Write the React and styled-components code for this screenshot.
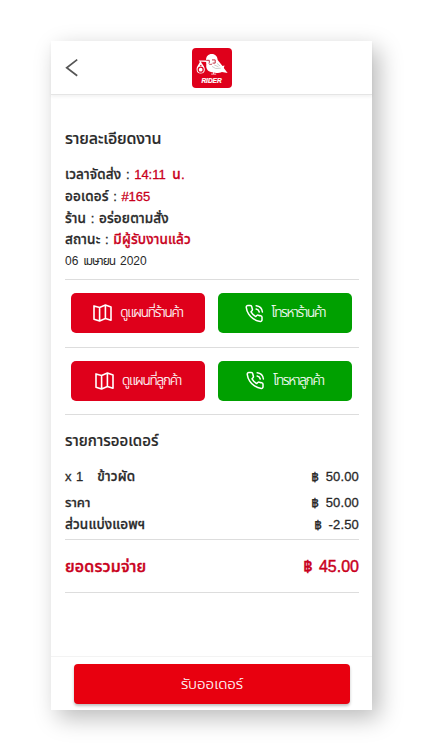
// Imports
import React from "react";
import styled, { createGlobalStyle } from "styled-components";

// Back arrow
const BackIcon = () => (
	<svg width="14" height="20" viewBox="0 0 14 20" fill="none" stroke="#555" strokeWidth="1.7">
		<path d="M12.2 1.6 1.7 9.8l10.5 8"/>
	</svg>
);

// Folded map
const MapIcon = () => (
	<svg width="19" height="18" viewBox="0 0 19 18" fill="none" stroke="#fff" strokeWidth="1.6" strokeLinejoin="round">
		<path d="M1 1.9 6.6 3.4l5.8-2.3L18 3v13.2l-5.6-1.7-5.8 2.4L1 15.2zM6.6 3.4v13.5M12.4 1.1v13.4"/>
	</svg>
);

// Ringing phone
const CallIcon = () => (
	<svg width="19" height="19" viewBox="0 0 24 24" fill="none" stroke="#fff" strokeWidth="1.9" strokeLinecap="round" strokeLinejoin="round">
		<path d="M14.1 6.2a5 5 0 0 1 3.9 3.9M14.1 2.2a9 9 0 0 1 7.9 7.9M21.5 17v3a2 2 0 0 1-2.2 2 19.8 19.8 0 0 1-8.6-3.1 19.5 19.5 0 0 1-6-6A19.8 19.8 0 0 1 1.6 4.2 2 2 0 0 1 3.6 2h3a2 2 0 0 1 2 1.7c.1 1 .4 1.9.7 2.8a2 2 0 0 1-.5 2.1L7.6 9.9a16 16 0 0 0 6 6l1.3-1.3a2 2 0 0 1 2.1-.4c.9.3 1.8.6 2.8.7a2 2 0 0 1 1.7 2.1z"/>
	</svg>
);

// Bird carrying a money bag
const BirdIcon = () => (
	<svg width="40" height="27" viewBox="0 0 40 27">
		<path d="M14 12.4c0-3.9 2.2-6.3 5.8-6.3s5.6 2.4 5.9 6l4.8 5.8 2-.4-.7 2.6 3.8 4.9-5.7-1.1c-2.5 1.3-7.9 1.3-11 .2-3.6-1.3-5-4-4.6-7.4z" fill="#fff"/>
		<path d="M6.8 12.6h10.4v1.5H14l-6.8-.5z" fill="#fff"/>
		<path d="M8 13.3c-.3 2.5-3.4 4.6-3.4 8.1a4.1 4.1 0 0 0 8.2 0c0-3.3-3.5-5.5-3.8-8.1z" fill="#fff"/>
		<circle cx="8.7" cy="21.7" r="2.5" fill="none" stroke="#df001b" strokeWidth="1.2"/>
		<path d="M8 17.4h1.5M14.2 12.3h3.1v2.6M20 11.9h3.2v3.2h-2.6M16.7 15.6c1.2 1 2.4 1 3.4.4" fill="none" stroke="#b8172a" strokeWidth=".9"/>
		<path d="m20 18.4 3.7 2.1 5-.3M22.3 17l4.2 1.8M25 15.4l3 2.6" stroke="#aaa" strokeWidth=".6" fill="none"/>
		<path d="M21.6 24v2M19.2 26.1h5" stroke="#fff" strokeWidth=".8"/>
	</svg>
);

// Data
const details = [
	{ label: "เวลาจัดส่ง", time: "14:11", value: "น.", accent: true },
	{ label: "ออเดอร์", time: "#165", accent: true },
	{ label: "ร้าน", value: "อร่อยตามสั่ง" },
	{ label: "สถานะ", value: "มีผู้รับงานแล้ว", accent: true },
];

const contacts = [
	{ map: "ดูแผนที่ร้านค้า", call: "โทรหาร้านค้า" },
	{ map: "ดูแผนที่ลูกค้า", call: "โทรหาลูกค้า" },
];

// Component
const App = () => {

	// Return
	return(
		<Page>
			<GlobalStyle/>
			<Phone>
				<Header>
					<Side><BackIcon/></Side>
					<Logo><BirdIcon/><LogoName>RIDER</LogoName></Logo>
					<Side/>
				</Header>
				<Content>
					<Title>รายละเอียดงาน</Title>
					<Details>
						{ details.map(({ label, time, value, accent }) => (
							<Detail key={ label }>
								<Thai>{ label }</Thai> : <Value $accent={ accent }>{ time }{ time && value && " " }<Thai>{ value }</Thai></Value>
							</Detail>
						)) }
						<DateLine>06 <Month>เมษายน</Month> 2020</DateLine>
					</Details>
					{ contacts.map(({ map, call }) => (
						<Actions key={ map }>
							<Action><MapIcon/><ActionLabel>{ map }</ActionLabel></Action>
							<Action $call><CallIcon/><ActionLabel>{ call }</ActionLabel></Action>
						</Actions>
					)) }
					<Order>
						<OrderTitle>รายการออเดอร์</OrderTitle>
						<Item><span><Quantity>x 1</Quantity><Thai>ข้าวผัด</Thai></span><Amount>฿ 50.00</Amount></Item>
						<Row><span>ราคา</span><Amount>฿ 50.00</Amount></Row>
						<Row><Thai>ส่วนแบ่งแอพฯ</Thai><Amount>฿ -2.50</Amount></Row>
					</Order>
					<Total><Thai>ยอดรวมจ่าย</Thai><span>฿ 45.00</span></Total>
				</Content>
				<Footer><Accept>รับออเดอร์</Accept></Footer>
			</Phone>
		</Page>
	);

};

// Styled
const GlobalStyle = createGlobalStyle`
	*{
		box-sizing: border-box;
	}
	body{
		margin: 0;
		background-color: white;
		color: #292929;
		font-family: "Liberation Sans", "Noto Sans Thai", "Noto Sans", sans-serif;
		font-size: 13px;
	}
	svg{
		display: block;
		flex-shrink: 0;
	}
`;

const Page = styled.div`
	height: 750px;
	padding: 41px 0 0 51px;
	overflow: hidden;
`;

const Phone = styled.main`
	display: flex;
	flex-direction: column;
	width: 321px;
	height: 669px;
	background-color: white;
	box-shadow: 7px 8px 22px rgba(0,0,0,0.27);
`;

const Header = styled.header`
	display: flex;
	align-items: center;
	justify-content: space-between;
	height: 54px;
	padding: 0 14px;
	border-bottom: 1px solid #e5e5e5;
	box-shadow: 0 2px 3px rgba(0,0,0,0.05);
`;

const Side = styled.div`
	width: 40px;
`;

const Logo = styled.div`
	display: flex;
	flex-direction: column;
	width: 40px;
	height: 40px;
	border-radius: 4px;
	background-color: #df001b;
	overflow: hidden;
`;

const LogoName = styled.span`
	color: white;
	font-size: 6.5px;
	font-style: italic;
	font-weight: bold;
	line-height: 12px;
	text-align: center;
	-webkit-text-stroke: 0.2px currentColor;
`;

const Content = styled.section`
	flex: 1;
	padding: 34px 13px 0 14px;
	white-space: nowrap;
`;

const Thai = styled.span`
	font-size: 13.5px;
	letter-spacing: 0.15px;
`;

const Title = styled.h1`
	height: 20px;
	margin: 0 0 15px;
	font-size: 16px;
	font-weight: 500;
	letter-spacing: -0.15px;
	line-height: 20px;
	-webkit-text-stroke: 0.2px currentColor;
`;

const Details = styled.div`
	height: 116px;
	border-bottom: 1px solid #ddd;
`;

const Detail = styled.div`
	height: 21.8px;
	font-weight: 500;
	line-height: 22px;
	word-spacing: 1px;
	-webkit-text-stroke: 0.3px currentColor;
`;

const Value = styled.span`
	color: ${ ({ $accent }) => $accent ? '#c9001c' : 'inherit' };
	word-spacing: 3px;
`;

const DateLine = styled.div`
	font-size: 12px;
	line-height: 20px;
	word-spacing: 1.5px;
`;

const Month = styled.span`
	letter-spacing: -1px;
`;

const Actions = styled.div`
	display: flex;
	gap: 13px;
	height: 67.6px;
	padding: 13.2px 7px 0 6px;
	border-bottom: 1px solid #ddd;
`;

const Action = styled.button`
	display: flex;
	flex: 1;
	align-items: center;
	justify-content: center;
	gap: 8px;
	height: 40px;
	padding: 0;
	border: 0;
	border-radius: 5px;
	background-color: ${ ({ $call }) => $call ? '#00a000' : '#df001b' };
	color: white;
	font-family: inherit;
	font-size: 13.5px;
	font-weight: 300;
`;

const ActionLabel = styled.span`
	letter-spacing: -1.2px;
	-webkit-text-stroke: 0.15px currentColor;
`;

const Order = styled.div`
	height: 125px;
	padding-top: 15px;
	border-bottom: 1px solid #ddd;
`;

const OrderTitle = styled.h2`
	height: 22px;
	margin: 0 0 14px;
	font-size: 15px;
	font-weight: 500;
	letter-spacing: 0.05px;
	line-height: 22px;
	-webkit-text-stroke: 0.2px currentColor;
`;

const Row = styled.div`
	display: flex;
	justify-content: space-between;
	height: 22px;
	font-weight: 500;
	line-height: 22px;
	-webkit-text-stroke: 0.3px currentColor;
`;

const Item = styled(Row)`
	height: 26px;
`;

const Quantity = styled.span`
	margin-right: 14px;
	word-spacing: 1px;
`;

const Amount = styled.span`
	letter-spacing: 0.15px;
	word-spacing: 3px;
`;

const Total = styled(Row)`
	height: 53px;
	border-bottom: 1px solid #ddd;
	color: #c9001c;
	font-size: 16px;
	line-height: 53px;
	word-spacing: 2px;
	-webkit-text-stroke: 0.45px currentColor;
	${ Thai }{
		font-size: 16px;
		letter-spacing: 0.2px;
	}
`;

const Footer = styled.footer`
	height: 54px;
	padding: 7px 22px 0 23px;
	border-top: 1px solid #f3f3f3;
`;

const Accept = styled.button`
	display: block;
	width: 100%;
	height: 40px;
	padding: 0;
	border: 0;
	border-radius: 4px;
	background-color: #e8000f;
	box-shadow: 0 2px 3px rgba(0,0,0,0.25);
	color: white;
	font-family: inherit;
	font-size: 15px;
	font-weight: 300;
	-webkit-text-stroke: 0.15px currentColor;
`;

// Export
export default App;
